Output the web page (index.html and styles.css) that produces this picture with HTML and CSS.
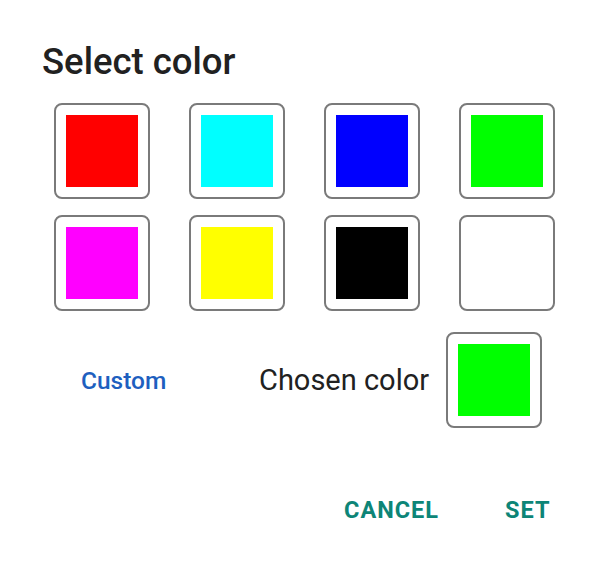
FILE: index.html
```html
<!DOCTYPE html>
<html>
<head>
<meta charset="utf-8">
<link rel="stylesheet" href="styles.css">
</head>
<body>
<div class="dialog">
  <h1 class="title">Select color</h1>
  <div class="grid">
    <div class="swatch"><div class="fill red"></div></div>
    <div class="swatch"><div class="fill cyan"></div></div>
    <div class="swatch"><div class="fill blue"></div></div>
    <div class="swatch"><div class="fill green"></div></div>
    <div class="swatch"><div class="fill magenta"></div></div>
    <div class="swatch"><div class="fill yellow"></div></div>
    <div class="swatch"><div class="fill black"></div></div>
    <div class="swatch"><div class="fill white"></div></div>
  </div>
  <div class="chosen-row">
    <span class="custom">Custom</span>
    <span class="chosen-label">Chosen color</span>
    <div class="swatch"><div class="fill green"></div></div>
  </div>
  <div class="actions">
    <span class="btn cancel">CANCEL</span>
    <span class="btn set">SET</span>
  </div>
</div>
</body>
</html>
```

FILE: styles.css
```css
html, body {
  margin: 0;
  padding: 0;
  background: #ffffff;
}
body {
  font-family: Roboto, "Liberation Sans", sans-serif;
  width: 606px;
  height: 568px;
}
.dialog {
  padding: 41px 0 0 0;
}
.title {
  margin: 0 0 0 42px;
  font-size: 36.5px;
  font-weight: 500;
  color: #212121;
  line-height: 42px;
}
.grid {
  margin: 20px 0 0 54px;
  display: grid;
  grid-template-columns: repeat(4, 96px);
  column-gap: 39px;
  row-gap: 16px;
}
.swatch {
  box-sizing: border-box;
  width: 96px;
  height: 96px;
  border: 2px solid #7a7a7a;
  border-radius: 8px;
  padding: 10px;
  background: #fff;
}
.fill {
  width: 72px;
  height: 72px;
}
.red { background: #ff0000; }
.cyan { background: #00ffff; }
.blue { background: #0000ff; }
.green { background: #00ff00; }
.magenta { background: #ff00ff; }
.yellow { background: #ffff00; }
.black { background: #000000; }
.white { background: #ffffff; }
.chosen-row {
  display: flex;
  align-items: center;
  margin: 21px 0 0 0;
}
.custom {
  margin-left: 81px;
  width: 178px;
  font-size: 24.5px;
  font-weight: 500;
  color: #1e5fbf;
  line-height: 30px;
  padding-top: 1px;
}
.chosen-label {
  font-size: 29px;
  color: #212121;
  margin-right: 17px;
  line-height: 34px;
}
.actions {
  display: flex;
  margin: 67px 0 0 344px;
  align-items: center;
}
.btn {
  font-size: 23.5px;
  font-weight: 700;
  letter-spacing: 1px;
  color: #0d8577;
  line-height: 30px;
}
.cancel {
  margin-right: 66px;
}
```
